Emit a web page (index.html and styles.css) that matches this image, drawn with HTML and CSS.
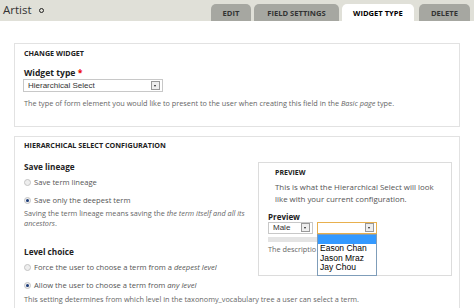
FILE: index.html
```html
<!DOCTYPE html>
<html lang="en">
<head>
    <meta charset="UTF-8">
    <meta name="viewport" content="width=device-width, initial-scale=1.0">
    <title>Artist - Widget type</title>
    <link rel="stylesheet" href="styles.css">
</head>
<body>
    <div class="header">
        <h1 class="title">Artist <span class="ring"></span></h1>
        <ul class="tabs">
            <li class="tab-edit"><a href="#">Edit</a></li>
            <li class="tab-settings"><a href="#">Field settings</a></li>
            <li class="tab-widget active"><a href="#">Widget type</a></li>
            <li class="tab-delete"><a href="#">Delete</a></li>
        </ul>
    </div>

    <div class="page">
        <div class="fieldset change-widget">
            <div class="legend">Change widget</div>
            <div class="label">Widget type <span class="req">*</span></div>
            <div class="select widget-select">
                <span class="value">Hierarchical Select</span>
                <span class="arrow"></span>
            </div>
            <div class="description">The type of form element you would like to present to the user when creating this field in the <em>Basic page</em> type.</div>
        </div>

        <div class="fieldset config">
            <div class="legend">Hierarchical Select configuration</div>

            <div class="config-body">
                <div class="options">
                    <h3 class="group-title">Save lineage</h3>
                    <div class="radio first"><span class="dot"></span><span>Save term lineage</span></div>
                    <div class="radio"><span class="dot checked"></span><span>Save only the deepest term</span></div>
                    <div class="description">Saving the term lineage means saving the <em>the term itself and all its ancestors</em>.</div>

                    <h3 class="group-title level">Level choice</h3>
                    <div class="radio first"><span class="dot"></span><span>Force the user to choose a term from a <em>deepest level</em></span></div>
                    <div class="radio"><span class="dot checked"></span><span>Allow the user to choose a term from <em>any level</em></span></div>
                </div>

                <div class="preview">
                    <div class="preview-legend">Preview</div>
                    <p class="preview-text">This is what the Hierarchical Select will look like with your current configuration.</p>
                    <div class="preview-label">Preview</div>
                    <div class="preview-row">
                        <div class="select small-select">
                            <span class="value">Male</span>
                            <span class="arrow"></span>
                        </div>
                        <div class="select child-select focused">
                            <span class="value"></span>
                            <span class="arrow"></span>
                        </div>
                        <ul class="dropdown">
                            <li class="selected">&nbsp;</li>
                            <li>Eason Chan</li>
                            <li>Jason Mraz</li>
                            <li>Jay Chou</li>
                        </ul>
                    </div>
                    <div class="progress"></div>
                    <div class="description">The descriptio</div>
                </div>
            </div>

            <div class="description level-desc">This setting determines from which level in the taxonomy_vocabulary tree a user can select a term.</div>
        </div>
    </div>
</body>
</html>
```

FILE: styles.css
```css
body {
    margin: 0;
    background-color: #ffffff;
    font-family: "Open Sans", Arial, sans-serif;
    color: #333;
    overflow: hidden;
}

.header {
    display: flex;
    align-items: flex-end;
    height: 21px;
    background-color: #e0e0d8;
}

.title {
    align-self: center;
    margin: 0 0 2px 3px;
    font-size: 11.5px;
    line-height: 14px;
    font-weight: normal;
    color: #333;
    display: flex;
    align-items: center;
}

.ring {
    display: inline-block;
    width: 3px;
    height: 3px;
    border: 1.5px solid #222;
    border-radius: 50%;
    margin-left: 7px;
    margin-top: 1px;
}

.tabs {
    list-style: none;
    display: flex;
    align-items: flex-end;
    margin: 0 4px 0 auto;
    padding: 0;
}

.tabs li {
    margin-left: 3px;
}

.tabs li.tab-delete {
    margin-left: 5px;
}

.tabs a {
    display: block;
    height: 17px;
    line-height: 18px;
    text-align: center;
    background-color: #a6a7a1;
    border-radius: 5px 5px 0 0;
    color: #333;
    font-size: 7.6px;
    font-weight: bold;
    text-transform: uppercase;
    text-decoration: none;
}

.tab-edit a { width: 40px; }
.tab-settings a { width: 85px; }
.tab-widget a { width: 72px; }
.tab-delete a { width: 51px; }

.tabs .active a {
    background-color: #ffffff;
    color: #000;
}

.page {
    padding: 22px 14px 0 14px;
}

.fieldset {
    border: 1px solid #e2e2e2;
    padding: 0 7px 0 9px;
}

.change-widget {
    height: 82px;
    margin-bottom: 9px;
}

.legend {
    font-size: 7.2px;
    font-weight: bold;
    text-transform: uppercase;
    color: #222;
    line-height: 9px;
    padding-top: 5px;
}

.config > .legend {
    padding-top: 4px;
}

.label {
    margin-top: 11px;
    font-size: 8.6px;
    font-weight: bold;
    color: #222;
    line-height: 9px;
}

.req {
    color: #e00;
}

.select {
    display: flex;
    align-items: center;
    justify-content: space-between;
    box-sizing: border-box;
    height: 13px;
    border: 1px solid #c8c8c8;
    background: #fff;
    font-family: "Liberation Sans", Arial, sans-serif;
    font-size: 8px;
    color: #333;
    padding-left: 4px;
}

.arrow {
    width: 7px;
    height: 7px;
    margin-right: 2px;
    border: 1px solid #999;
    background: #eee;
    position: relative;
}

.arrow::after {
    content: "";
    position: absolute;
    left: 2px;
    top: 3px;
    border-left: 1.5px solid transparent;
    border-right: 1.5px solid transparent;
    border-top: 2px solid #222;
}

.widget-select {
    width: 140px;
    margin-top: 1px;
    margin-left: -1px;
}

.description {
    font-size: 7.3px;
    color: #666;
    line-height: 10px;
    margin-top: 4px;
}

.change-widget .description {
    margin-top: 6px;
}

.config-body {
    display: flex;
    justify-content: space-between;
    align-items: flex-start;
}

.options {
    width: 228px;
}

.options .description {
    margin-top: 2.5px;
    line-height: 10.5px;
}

.group-title {
    margin: 12px 0 0 0;
    font-size: 8.2px;
    font-weight: bold;
    color: #222;
    line-height: 10px;
}

.group-title.level {
    margin-top: 18.5px;
}

.radio {
    display: flex;
    align-items: center;
    font-size: 7.6px;
    color: #555;
    line-height: 10px;
    margin-top: 8px;
    white-space: nowrap;
}

.radio.first {
    margin-top: 5px;
}

.dot {
    box-sizing: border-box;
    flex: none;
    width: 7px;
    height: 7px;
    border: 1px solid #c4c4c4;
    border-radius: 50%;
    background: #eee;
    margin-right: 3px;
    position: relative;
}

.dot.checked::after {
    content: "";
    position: absolute;
    left: 1px;
    top: 1px;
    width: 3px;
    height: 3px;
    border-radius: 50%;
    background: #1b3b78;
}

.level-desc {
    margin-top: 4px;
    padding-bottom: 10px;
}

.preview {
    width: 194px;
    height: 114px;
    box-sizing: border-box;
    margin-top: 12px;
    border: 1px solid #dcdcdc;
    padding: 0 8px 0 9px;
}

.preview-legend {
    font-size: 7px;
    font-weight: bold;
    text-transform: uppercase;
    color: #222;
    line-height: 9px;
    margin-top: 5px;
    padding-left: 7px;
}

.preview-text {
    margin: 4px 0 0 0;
    padding-left: 7px;
    font-size: 7.9px;
    line-height: 12px;
    color: #555;
}

.preview-label {
    margin-top: 7px;
    font-size: 8px;
    font-weight: bold;
    color: #222;
    line-height: 9px;
}

.preview-row {
    display: flex;
    gap: 4px;
    position: relative;
    margin-top: 0.5px;
}

.small-select {
    width: 45px;
    height: 12px;
}

.child-select {
    width: 60px;
    height: 12px;
}

.child-select.focused {
    border-color: #e8b04e;
}

.dropdown {
    position: absolute;
    left: 49px;
    top: 12px;
    width: 60px;
    box-sizing: border-box;
    margin: 0;
    padding: 0 0 2px 0;
    list-style: none;
    border: 1px solid #7f9db9;
    background: #fff;
    font-family: "Liberation Sans", Arial, sans-serif;
    font-size: 8.5px;
    line-height: 9.5px;
    color: #000;
    z-index: 2;
}

.dropdown li {
    padding-left: 2px;
}

.dropdown li.selected {
    background: #3399ff;
}

.progress {
    width: 49px;
    height: 5px;
    margin-top: 3px;
    background: #e4e4e4;
}

.preview .description {
    margin-top: 2px;
    white-space: nowrap;
}
```
